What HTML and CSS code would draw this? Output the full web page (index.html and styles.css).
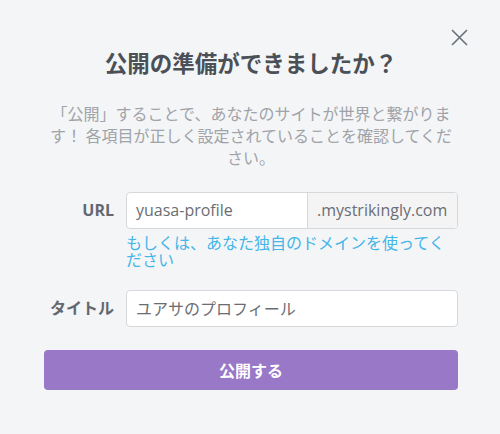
FILE: index.html
```html
<!DOCTYPE html>
<html lang="ja">
<head>
<meta charset="utf-8">
<link rel="stylesheet" href="styles.css">
</head>
<body>
<div class="modal">
  <button class="close" aria-label="閉じる">
    <svg width="17" height="17" viewBox="0 0 17 17"><path d="M1 1L16 16M16 1L1 16" stroke="#68707a" stroke-width="1.6" fill="none"/></svg>
  </button>
  <h1 class="title">公開の準備ができましたか？</h1>
  <p class="desc">「公開」することで、あなたのサイトが世界と繋がります！ 各項目が正しく設定されていることを確認してください。</p>
  <div class="row">
    <label class="label">URL</label>
    <div class="field">
      <div class="group">
        <div class="input">yuasa-profile</div>
        <div class="addon">.mystrikingly.com</div>
      </div>
      <a class="help">もしくは、あなた独自のドメインを使ってください</a>
    </div>
  </div>
  <div class="row row-title">
    <label class="label">タイトル</label>
    <div class="field">
      <div class="input single">ユアサのプロフィール</div>
    </div>
  </div>
  <button class="publish">公開する</button>
</div>
</body>
</html>
```
FILE: styles.css
```css
html, body {
  margin: 0;
  padding: 0;
  background: #f4f5f7;
}
body {
  font-family: "Open Sans", "Noto Sans CJK JP", sans-serif;
  width: 500px;
  height: 434px;
  overflow: hidden;
}
.modal {
  position: relative;
  padding: 47px 42px 0 44px;
}
.close {
  position: absolute;
  top: 29px;
  right: 32px;
  border: 0;
  background: none;
  padding: 0;
  width: 17px;
  height: 17px;
  cursor: pointer;
}
.close svg { display: block; }
.title {
  margin: 0;
  font-family: "Noto Sans CJK JP", sans-serif;
  font-size: 22.5px;
  line-height: 30px;
  font-weight: 700;
  color: #4b4f56;
  text-align: center;
}
.desc {
  margin: 25px 0 0;
  font-family: "Noto Sans CJK JP", sans-serif;
  font-size: 16px;
  line-height: 22px;
  color: #a0a3a8;
  text-align: center;
}
.row {
  display: flex;
  align-items: flex-start;
  margin-top: 24px;
}
.row-title { margin-top: 22px; }
.label {
  width: 70px;
  flex: none;
  text-align: right;
  font-family: "Open Sans", "Noto Sans CJK JP", sans-serif;
  font-size: 16px;
  font-weight: 700;
  color: #636870;
  line-height: 37px;
  margin-right: 12px;
}
.field {
  flex: 1;
}
.group {
  display: flex;
  height: 37px;
  border: 1px solid #d6d8db;
  border-radius: 4px;
  box-sizing: border-box;
  background: #fff;
  overflow: hidden;
}
.input {
  flex: 1;
  padding: 0 9px;
  font-size: 16px;
  line-height: 35px;
  color: #6a6e74;
  font-family: "Open Sans", "Noto Sans CJK JP", sans-serif;
}
.input.single {
  height: 37px;
  box-sizing: border-box;
  border: 1px solid #d6d8db;
  border-radius: 4px;
  background: #fff;
  font-family: "Noto Sans CJK JP", sans-serif;
}
.addon {
  width: 150px;
  flex: none;
  background: #f4f4f5;
  border-left: 1px solid #d6d8db;
  padding: 0 0 0 9px;
  box-sizing: border-box;
  font-size: 16px;
  line-height: 35px;
  color: #6a6e74;
  white-space: nowrap;
}
.help {
  display: block;
  margin-top: 5px;
  font-family: "Noto Sans CJK JP", sans-serif;
  font-size: 16px;
  line-height: 17px;
  color: #45b6e8;
  cursor: pointer;
}
.publish {
  display: block;
  width: 414px;
  height: 40px;
  margin-top: 23px;
  border: 0;
  border-radius: 4px;
  background: #9978c8;
  color: #fff;
  font-family: "Noto Sans CJK JP", sans-serif;
  font-size: 16px;
  font-weight: 700;
  line-height: 38px;
  padding: 0;
  cursor: pointer;
}
```
